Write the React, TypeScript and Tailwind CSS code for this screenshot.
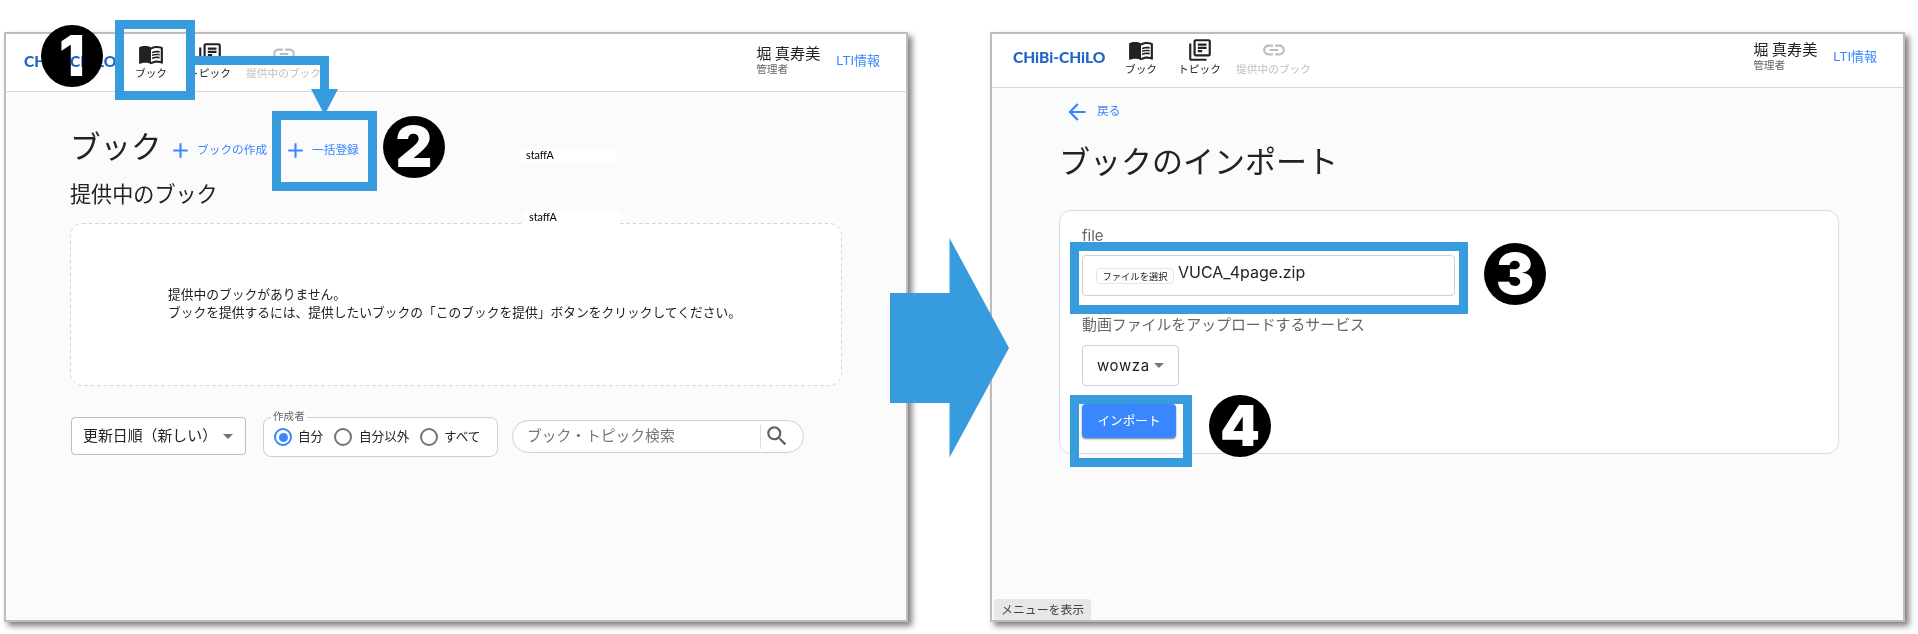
import React from "react";
import {
  MdAdd,
  MdArrowBack,
  MdLink,
  MdMenuBook,
  MdOutlineLibraryBooks,
  MdSearch,
} from "react-icons/md";

function NavItem({ icon, label, className }: { icon: React.ReactNode; label: string; className: string }) {
  return (
    <div className={"flex flex-col items-center " + className}>
      {icon}
      <span className="h-3 whitespace-nowrap text-[10.7px] leading-[12px]">{label}</span>
    </div>
  );
}

function Header({ className, navClass, userClass }: { className: string; navClass: string; userClass: string }) {
  return (
    <header className={"flex shrink-0 items-start border-b border-[#d9d9d9] bg-white " + className}>
      <div className="mt-[11px] w-[92px] whitespace-nowrap font-['Lato'] text-[15.5px] leading-[18px] font-black text-[#2264c8]">
        CHiBi-CHiLO
      </div>
      <nav className={"flex items-start " + navClass}>
        <NavItem className="w-8 text-[#222]" icon={<MdMenuBook size={26} />} label="ブック" />
        <NavItem className="ml-[21px] w-[43px] text-[#222]" icon={<MdOutlineLibraryBooks size={26} />} label="トピック" />
        <NavItem className="ml-[15px] w-[75px] text-[#bdbdbd]" icon={<MdLink size={26} />} label="提供中のブック" />
      </nav>
      <div className={"ml-auto flex items-start " + userClass}>
        <div className="flex w-[80px] flex-col pt-[4px]">
          <span className="h-[17px] whitespace-nowrap text-[15.2px] leading-[15px] text-[#222]">堀 真寿美</span>
          <span className="h-[14px] whitespace-nowrap text-[10.7px] leading-[14px] text-[#666]">管理者</span>
        </div>
        <span className="mt-[12px] whitespace-nowrap font-['Liberation_Sans','Noto_Sans_CJK_JP',sans-serif] text-[13px] leading-[16px] text-[#3a86ff]">
          LTI情報
        </span>
      </div>
    </header>
  );
}

function Caret() {
  return (
    <svg width="10" height="5" viewBox="0 0 10 5" className="shrink-0 fill-[#757575]">
      <path d="M0 0h10L5 5z" />
    </svg>
  );
}

function Radio({ checked = false }: { checked?: boolean }) {
  return (
    <span
      className={
        "flex size-[18px] shrink-0 items-center justify-center rounded-full border-2 " +
        (checked ? "border-[#3a86ff]" : "border-[#757575]")
      }
    >
      {checked && <span className="size-[9px] rounded-full bg-[#3a86ff]" />}
    </span>
  );
}

function Badge({ n, className }: { n: string; className: string }) {
  return (
    <div
      className={
        "absolute flex size-[62px] items-center justify-center rounded-full bg-black font-['Inter'] text-[57px] leading-[62px] font-black text-white mix-blend-multiply " +
        className
      }
    >
      {n}
    </div>
  );
}

function BookList() {
  return (
    <section className="flex h-[590px] w-[904px] flex-col border-2 border-[#bdbdbd] bg-[#fbfbfb] shadow-[4px_4px_6px_rgba(0,0,0,0.5)]">
      <Header className="h-[58px] pt-[7px] pl-[18px]" navClass="ml-[19px]" userClass="mr-[26px]" />
      <main className="flex flex-col pl-[64px] text-[#222]">
        <div className="mt-[38px] flex h-[36px] items-start">
          <h1 className="mt-[-3px] w-[98px] text-[30.5px] leading-[36px] whitespace-nowrap">ブック</h1>
          <div className="mt-[8px] flex items-center text-[11.7px] leading-[16px] text-[#3a86ff]">
            <MdAdd size={25} />
            <span className="mb-[3px] ml-1 w-[86px] whitespace-nowrap">ブックの作成</span>
            <MdAdd size={25} />
            <span className="mb-[3px] ml-1 whitespace-nowrap">一括登録</span>
          </div>
        </div>
        <h2 className="mt-[13px] h-[28px] text-[21.1px] leading-[28px]">提供中のブック</h2>
        <div className="relative mt-[16px] flex h-[163px] w-[772px] flex-col rounded-xl bg-white pt-[62px] pl-[98px] text-[12.75px] leading-[18.4px] whitespace-nowrap">
          <svg className="absolute inset-0 fill-none stroke-[#d4d4d4]" width="772" height="163">
            <rect x="0.5" y="0.5" width="771" height="162" rx="12" strokeDasharray="3.6 2.8" />
          </svg>
          <p>提供中のブックがありません。</p>
          <p>ブックを提供するには、提供したいブックの「このブックを提供」ボタンをクリックしてください。</p>
        </div>
        <div className="mt-[31px] flex items-start">
          <div className="ml-px flex h-[38px] w-[175px] items-center rounded-[4px] border border-[#bdbdbd] bg-white pl-[11px] text-[14.9px] leading-[20px]">
            <span className="mb-[2px] w-[140px] whitespace-nowrap">更新日順（新しい）</span>
            <Caret />
          </div>
          <div className="relative ml-[17px] flex h-[40px] w-[235px] items-center rounded-lg border border-[#cfcfcf] bg-white pl-[10px] text-[12.6px] leading-[18px]">
            <span className="absolute -top-[10px] left-[7px] h-4 bg-[linear-gradient(#fbfbfb_60%,#fff_60%)] px-[2px] text-[10.6px] leading-[16px] text-[#666]">
              作成者
            </span>
            <Radio checked />
            <span className="mb-[2px] ml-[6px] w-[36px] whitespace-nowrap">自分</span>
            <Radio />
            <span className="mb-[2px] ml-[7px] w-[61px] whitespace-nowrap">自分以外</span>
            <Radio />
            <span className="mb-[2px] ml-[6px] whitespace-nowrap">すべて</span>
          </div>
          <div className="mt-[3px] ml-[14px] flex h-[33px] w-[292px] items-center rounded-full border border-[#cfcfcf] bg-white pl-[14px] text-[14.8px] text-[#757575]">
            <span className="w-[233px] pb-[4px] leading-[20px] whitespace-nowrap">ブック・トピック検索</span>
            <span className="h-[25px] w-px bg-[#e0e0e0]" />
            <MdSearch size={26} className="mb-[2px] ml-[3px] text-[#616161]" />
          </div>
        </div>
      </main>
    </section>
  );
}

function BookImport() {
  return (
    <section className="ml-[82px] flex h-[590px] w-[915px] flex-col border-2 border-[#bdbdbd] bg-[#fbfbfb] shadow-[4px_4px_6px_rgba(0,0,0,0.5)]">
      <Header className="h-[54px] pt-[3px] pl-[21px]" navClass="ml-[20px]" userClass="mr-[26px]" />
      <main className="flex flex-1 flex-col text-[#222]">
        <div className="mt-[11px] ml-[72px] flex h-[26px] items-center text-[11.7px] text-[#3a86ff]">
          <MdArrowBack size={26} />
          <span className="mb-[4px] ml-[7px] leading-[16px]">戻る</span>
        </div>
        <h1 className="mt-[17px] ml-[67px] h-[36px] text-[31px] leading-[36px] whitespace-nowrap">ブックのインポート</h1>
        <div className="mt-[32px] ml-[67px] flex h-[244px] w-[780px] flex-col items-start rounded-xl border border-[#dcdcdc] bg-white pl-[22px]">
          <label className="mt-[15px] h-[20px] font-['Inter'] text-[15px] leading-[20px] text-[#666]">file</label>
          <div className="mt-[9px] flex h-[41px] w-[373px] items-start rounded-[4px] border border-[#cfcfcf] pl-[13px]">
            <span className="mt-[12px] flex h-[16px] w-[78px] items-center justify-center rounded-[4px] border border-[#e4e4e4] text-[9.3px] leading-[14px] whitespace-nowrap">
              ファイルを選択
            </span>
            <span className="mt-[6px] ml-[4px] font-['Inter'] text-[16px] leading-[20px] whitespace-nowrap">VUCA_4page.zip</span>
          </div>
          <label className="mt-[18px] h-[20px] text-[14.9px] leading-[20px] whitespace-nowrap text-[#666]">
            動画ファイルをアップロードするサービス
          </label>
          <div className="mt-[11px] flex h-[41px] w-[97px] items-center rounded-[4px] border border-[#cfcfcf] pl-[14px]">
            <span className="w-[57px] font-['Inter'] text-[15px] leading-[20px] tracking-[0.6px]">wowza</span>
            <Caret />
          </div>
          <button className="mt-[18px] flex h-[34px] w-[94px] justify-center rounded-[4px] bg-[#3a86ff] text-[12.6px] leading-[31px] text-white shadow-[0_1px_2px_rgba(0,0,0,0.5)]">
            インポート
          </button>
        </div>
        <div className="mt-auto ml-[2px] h-[21px] w-[97px] rounded-t-[3px] bg-[#e8e6e6] pl-[7px] text-[11.9px] leading-[20px] whitespace-nowrap text-[#444]">
          メニューを表示
        </div>
      </main>
    </section>
  );
}

export default function App() {
  return (
    <div className="relative isolate flex h-[634px] w-[1918px] items-start overflow-hidden bg-white pt-8 pl-1 font-['Noto_Sans_CJK_JP',sans-serif]">
      <BookList />
      <BookImport />

      <div className="absolute top-[149px] left-[520px] h-[14px] w-[96px] bg-white pl-[6px] font-['Lato'] text-[10.8px] leading-[12px] text-black">
        staffA
      </div>
      <div className="absolute top-[211px] left-[524px] h-[14px] w-[96px] bg-white pl-[5px] font-['Lato'] text-[10.8px] leading-[12px] text-black">
        staffA
      </div>

      <div className="absolute top-[20px] left-[115px] size-20 border-[9px] border-[#379cde]" />
      <div className="absolute top-[111px] left-[272px] h-20 w-[105px] border-[9px] border-[#379cde]" />
      <div className="absolute top-[242px] left-[1070px] h-[72px] w-[398px] border-[9px] border-[#379cde]" />
      <div className="absolute top-[395px] left-[1070px] h-[72px] w-[122px] border-[9px] border-[#379cde]" />
      <svg className="absolute top-[56px] left-[194px] fill-[#379cde]" width="145" height="60" viewBox="0 0 145 60">
        <path d="M0 0h135v33h9L130.500 59 117 33h9V9H0z" />
      </svg>
      <svg className="absolute top-[238px] left-[890px] fill-[#379cde]" width="119" height="220" viewBox="0 0 119 220">
        <path d="M0 55h59.500V0L119 110 59.500 219.500V165H0z" />
      </svg>

      <Badge n="1" className="top-[25px] left-[41px]" />
      <Badge n="2" className="top-[116px] left-[383px]" />
      <Badge n="3" className="top-[243px] left-[1484px]" />
      <Badge n="4" className="top-[395px] left-[1209px]" />
    </div>
  );
}
